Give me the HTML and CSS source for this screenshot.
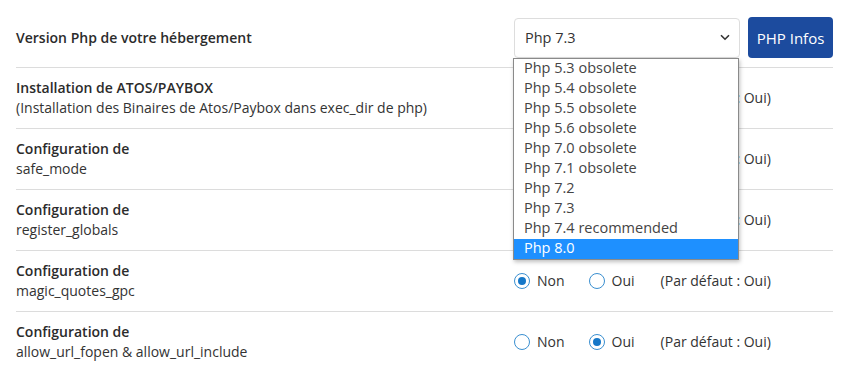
FILE: index.html
```html
<!DOCTYPE html>
<html lang="fr">
<head>
  <meta charset="UTF-8">
  <title>Configuration PHP</title>
  <link rel="stylesheet" href="styles.css">
</head>
<body>
  <div class="config">
    <div class="row row-top">
      <div class="label"><b>Version Php de votre hébergement</b></div>
      <div class="field">
        <div class="select-wrap">
          <div class="select">
            <span>Php 7.3</span>
            <svg class="chevron" width="10" height="7" viewBox="0 0 10 7"><path d="M1 1.2 5 5.2 9 1.2" fill="none" stroke="#333" stroke-width="1.6"/></svg>
          </div>
          <ul class="options">
            <li>Php 5.3 obsolete</li>
            <li>Php 5.4 obsolete</li>
            <li>Php 5.5 obsolete</li>
            <li>Php 5.6 obsolete</li>
            <li>Php 7.0 obsolete</li>
            <li>Php 7.1 obsolete</li>
            <li>Php 7.2</li>
            <li>Php 7.3</li>
            <li>Php 7.4 recommended</li>
            <li class="active">Php 8.0</li>
          </ul>
        </div>
        <button class="btn">PHP Infos</button>
      </div>
    </div>

    <div class="row">
      <div class="label"><b>Installation de ATOS/PAYBOX</b><br>(Installation des Binaires de Atos/Paybox dans exec_dir de php)</div>
      <div class="field radios">
        <label><input type="radio" name="atos"> Non</label>
        <label><input type="radio" name="atos" checked> Oui</label>
        <span class="hint">(Par défaut : Oui)</span>
      </div>
    </div>

    <div class="row">
      <div class="label"><b>Configuration de</b><br>safe_mode</div>
      <div class="field radios">
        <label><input type="radio" name="safe" checked> Non</label>
        <label><input type="radio" name="safe"> Oui</label>
        <span class="hint">(Par défaut : Oui)</span>
      </div>
    </div>

    <div class="row">
      <div class="label"><b>Configuration de</b><br>register_globals</div>
      <div class="field radios">
        <label><input type="radio" name="globals" checked> Non</label>
        <label><input type="radio" name="globals"> Oui</label>
        <span class="hint">(Par défaut : Oui)</span>
      </div>
    </div>

    <div class="row">
      <div class="label"><b>Configuration de</b><br>magic_quotes_gpc</div>
      <div class="field radios">
        <label><input type="radio" name="quotes" checked> Non</label>
        <label><input type="radio" name="quotes"> Oui</label>
        <span class="hint">(Par défaut : Oui)</span>
      </div>
    </div>

    <div class="row last">
      <div class="label"><b>Configuration de</b><br>allow_url_fopen &amp; allow_url_include</div>
      <div class="field radios">
        <label><input type="radio" name="fopen"> Non</label>
        <label><input type="radio" name="fopen" checked> Oui</label>
        <span class="hint">(Par défaut : Oui)</span>
      </div>
    </div>
  </div>
</body>
</html>
```

FILE: styles.css
```css
body {
  margin: 0;
  background: #fff;
  font-family: "Open Sans", sans-serif;
  font-size: 14px;
  line-height: 20px;
  color: #333;
}
.config {
  width: 817px;
  margin-left: 16px;
}
.row {
  display: grid;
  grid-template-columns: 498px 1fr;
  align-items: center;
  padding: 10px 0;
  border-bottom: 1px solid #dcdcdc;
}
.row-top {
  padding: 17px 0 9px;
  height: 41px;
}
.row.last {
  border-bottom: none;
}
.label b {
  font-weight: 600;
  color: #2b2b2b;
}
.field {
  display: flex;
  align-items: center;
}
.select-wrap {
  position: relative;
}
.select {
  box-sizing: border-box;
  width: 226px;
  height: 40px;
  border: 1px solid #ddd;
  border-radius: 4px;
  display: flex;
  align-items: center;
  justify-content: space-between;
  padding: 0 9px 0 10px;
  color: #333;
  font-size: 14.5px;
}
.options {
  position: absolute;
  top: 40px;
  left: -1px;
  width: 226px;
  box-sizing: border-box;
  margin: 0;
  padding: 0;
  list-style: none;
  background: #fff;
  border: 1px solid #8a8a8a;
  box-shadow: 1px 2px 4px rgba(0,0,0,0.25);
  z-index: 5;
}
.options li {
  padding: 0 10px;
  height: 20px;
  line-height: 18px;
  font-size: 14.5px;
  color: #444;
}
.options li.active {
  background: #1e90ff;
  color: #fff;
}
.btn {
  margin-left: 8px;
  height: 41px;
  width: 85px;
  padding: 0;
  border: none;
  border-radius: 4px;
  background: #1c4b9e;
  color: #fff;
  font-family: "Open Sans", sans-serif;
  font-size: 15px;
  font-weight: 400;
}
.radios {
  height: 40px;
}
.radios label {
  display: flex;
  align-items: center;
  margin-right: 24px;
}
.radios input {
  appearance: none;
  -webkit-appearance: none;
  width: 16px;
  height: 16px;
  margin: 0 7px 0 0;
  border: 1px solid #3a8fd0;
  border-radius: 50%;
  background: #fff;
  position: relative;
}
.radios input:checked::after {
  content: "";
  position: absolute;
  top: 3px;
  left: 3px;
  width: 8px;
  height: 8px;
  border-radius: 50%;
  background: #1577c8;
}
.hint {
  margin-left: 2px;
}
```
